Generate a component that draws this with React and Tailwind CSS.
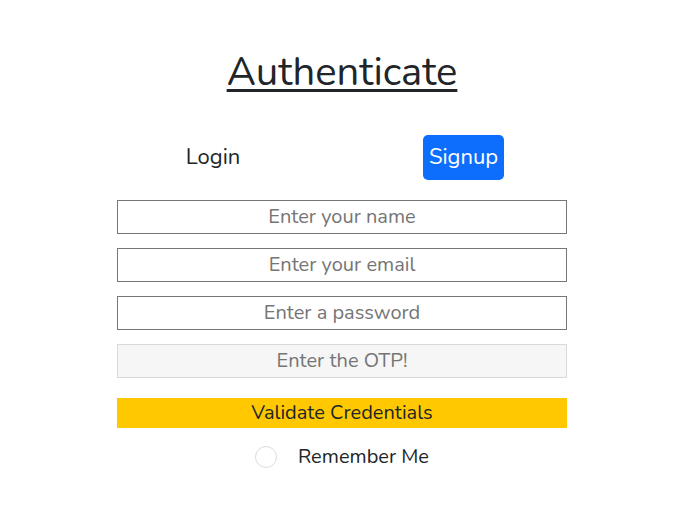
export default function App() {
  const font = { fontFamily: 'Nunito, Lato, "Noto Sans", sans-serif' };
  return (
    <div className="min-h-[528px] w-[698px] bg-white pr-[14px] text-[#212529]" style={font}>
      <div className="flex flex-col items-center pt-[48px]">
        <h1 className="text-[40px] leading-[48px] underline decoration-[3px] underline-offset-[4px] font-normal">Authenticate</h1>
        <div className="mt-[39px] flex w-[450px] items-center">
          <div className="w-[192px] text-center text-[22px]">Login</div>
          <div className="ml-[114px] flex h-[45px] w-[81px] items-center justify-center rounded-[5px] bg-[#0d6efd] text-[22px] text-white">Signup</div>
        </div>
        <div className="mt-[20px] flex w-[450px] flex-col gap-[14px]">
          <input className="h-[34px] w-full border border-[#767676] pb-[2px] text-center text-[20px] placeholder:text-[#757575] outline-none" placeholder="Enter your name" style={font} />
          <input className="h-[34px] w-full border border-[#767676] pb-[2px] text-center text-[20px] placeholder:text-[#757575] outline-none" placeholder="Enter your email" style={font} />
          <input className="h-[34px] w-full border border-[#767676] pb-[2px] text-center text-[20px] placeholder:text-[#757575] outline-none" placeholder="Enter a password" style={font} />
          <input disabled className="h-[34px] w-full border border-[#d9d9d9] bg-[#f6f6f6] pb-[2px] text-center text-[20px] placeholder:text-[#757575] outline-none" placeholder="Enter the OTP!" style={font} />
        </div>
        <div className="mt-[20px] flex h-[30px] w-[450px] items-center justify-center bg-[#ffc800] text-[20px]">Validate Credentials</div>
        <div className="mt-[14px] flex items-center">
          <span className="h-[22px] w-[22px] rounded-full border border-[#dcdcdc] bg-white"></span>
          <span className="ml-[21px] text-[20px]">Remember Me</span>
        </div>
      </div>
    </div>
  );
}
